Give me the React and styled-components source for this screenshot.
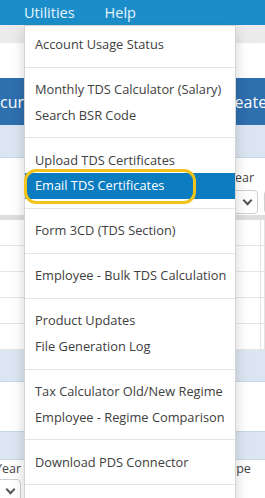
import React from "react";
import styled, { createGlobalStyle } from "styled-components";

const GlobalStyle = createGlobalStyle`
  html, body {
    margin: 0;
    padding: 0;
    background: #ffffff;
    font-family: "Open Sans", "Noto Sans", sans-serif;
  }
`;

const menuGroups = [
  ["Account Usage Status"],
  ["Monthly TDS Calculator (Salary)", "Search BSR Code"],
  ["Upload TDS Certificates", "Email TDS Certificates"],
  ["Form 3CD (TDS Section)"],
  ["Employee - Bulk TDS Calculation"],
  ["Product Updates", "File Generation Log"],
  ["Tax Calculator Old/New Regime", "Employee - Regime Comparison"],
  ["Download PDS Connector"],
  ["Settings"],
];

const App = () => {
  return (
    <>
      <GlobalStyle />
      <Page>
        <NavBar>
          <NavItem>Utilities</NavItem>
          <NavItem>Help</NavItem>
        </NavBar>
        <SubBar />
        <Spacer $h={35} />
        <ActionRow>
          <ActionButton $w={140}>curring Returns</ActionButton>
          <ActionButton $w={60} $pad={13}>Create</ActionButton>
        </ActionRow>
        <SectionHead />
        <FormRow>
          <Field $w={222} />
          <Field $w={30}>
            <FieldLabel>Year</FieldLabel>
            <SelectBox><Chevron /></SelectBox>
          </Field>
          <Field $w={30}>
            <FieldLabel>&nbsp;</FieldLabel>
            <SelectBox />
          </Field>
        </FormRow>
        <Table>
          {[0, 1, 2, 3, 4].map((i) => (
            <TableRow key={i}>
              <Cell />
              <Cell />
            </TableRow>
          ))}
        </Table>
        <SectionHead $h={31} />
        <Spacer $h={49} />
        <SectionHead $h={27} $top />
        <BottomRow>
          <EndField $w={21}>
            <FieldLabel>Financial Year</FieldLabel>
            <SelectBox><Chevron /></SelectBox>
          </EndField>
          <Field $w={202} />
          <Field $w={43}>
            <FieldLabel>Type</FieldLabel>
          </Field>
        </BottomRow>

        <Menu>
          {menuGroups.map((group, gi) => (
            <React.Fragment key={gi}>
              {gi > 0 && <Divider />}
              {group.map((label) => (
                <MenuItem key={label} $active={label === "Email TDS Certificates"}>
                  {label}
                  {label === "Email TDS Certificates" && <Marker />}
                </MenuItem>
              ))}
            </React.Fragment>
          ))}
        </Menu>
      </Page>
    </>
  );
};

const Page = styled.div`
  position: relative;
  width: 265px;
  height: 498px;
  overflow: hidden;
  background: #ffffff;
`;

const NavBar = styled.nav`
  height: 25px;
  background: #1b8ec9;
  display: flex;
  align-items: center;
  gap: 30px;
  padding-left: 24px;
`;

const NavItem = styled.span`
  font-size: 14.5px;
  color: #e6f4fc;
  line-height: 25px;
  margin-top: -1px;
`;

const SubBar = styled.div`
  height: 18px;
  background: #ebebeb;
`;

const Spacer = styled.div`
  height: ${(p) => p.$h}px;
`;

const ActionRow = styled.div`
  height: 47px;
  display: flex;
  justify-content: space-between;
`;

const ActionButton = styled.div`
  width: ${(p) => p.$w}px;
  flex-shrink: 0;
  background: #2e6fae;
  color: #ffffff;
  font-size: 16px;
  display: flex;
  align-items: center;
  padding-left: ${(p) => p.$pad || 0}px;
  box-sizing: border-box;
  white-space: nowrap;
  overflow: hidden;
`;

const SectionHead = styled.div`
  height: ${(p) => p.$h || 32}px;
  background: #dce6f2;
  border-bottom: 1px solid #c9d6e4;
  border-top: ${(p) => (p.$top ? "1px solid #c9d6e4" : "none")};
`;

const FormRow = styled.div`
  display: flex;
  gap: 6px;
  padding-top: 12px;
  box-sizing: border-box;
  border-bottom: 5px solid #dedede;
  height: 62px;
`;

const Field = styled.div`
  width: ${(p) => p.$w}px;
  flex-shrink: 0;
  display: flex;
  flex-direction: column;
  gap: 4px;
`;

const EndField = styled.div`
  width: ${(p) => p.$w}px;
  flex-shrink: 0;
  display: flex;
  flex-direction: column;
  align-items: flex-end;
  gap: 2px;
`;

const FieldLabel = styled.span`
  font-size: 12.5px;
  color: #444444;
  line-height: 16px;
  white-space: nowrap;
`;

const SelectBox = styled.div`
  width: 30px;
  height: 24px;
  flex-shrink: 0;
  box-sizing: border-box;
  border: 1px solid #cfcfcf;
  border-radius: 4px;
  display: flex;
  align-items: center;
  justify-content: flex-end;
  padding-right: 6px;
`;

const Chevron = styled.span`
  width: 5px;
  height: 5px;
  border-right: 2px solid #555555;
  border-bottom: 2px solid #555555;
  transform: rotate(45deg);
  margin-top: -4px;
`;

const Table = styled.div`
  display: flex;
  flex-direction: column;
`;

const TableRow = styled.div`
  height: 26px;
  box-sizing: border-box;
  border-bottom: 1px solid #e6e6e6;
  display: grid;
  grid-template-columns: 261px 1fr;
`;

const Cell = styled.div`
  border-right: 1px solid #e3e3e3;
`;

const BottomRow = styled.div`
  display: flex;
  padding-top: 1px;
  border-bottom: 1px solid #dddddd;
`;

const Menu = styled.ul`
  position: absolute;
  left: 24px;
  top: 25px;
  width: 212px;
  margin: 0;
  padding: 6px 0 0;
  list-style: none;
  background: #ffffff;
  border: 1px solid #d4d4d4;
  box-sizing: border-box;
  box-shadow: 0 6px 12px rgba(0, 0, 0, 0.18);
`;

const MenuItem = styled.li`
  position: relative;
  height: 25.5px;
  line-height: 25.5px;
  padding-left: 10px;
  font-size: 12.8px;
  color: ${(p) => (p.$active ? "#ffffff" : "#404040")};
  background: ${(p) => (p.$active ? "#0b7cc0" : "transparent")};
  white-space: nowrap;
`;

const Divider = styled.li`
  height: 1px;
  margin: 9.3px 0;
  background: #e5e5e5;
`;

const Marker = styled.span`
  position: absolute;
  left: -1px;
  top: -4px;
  width: 172px;
  height: 35px;
  box-sizing: border-box;
  border: 3.5px solid #f2c31a;
  border-radius: 12px;
  pointer-events: none;
`;

export default App;
